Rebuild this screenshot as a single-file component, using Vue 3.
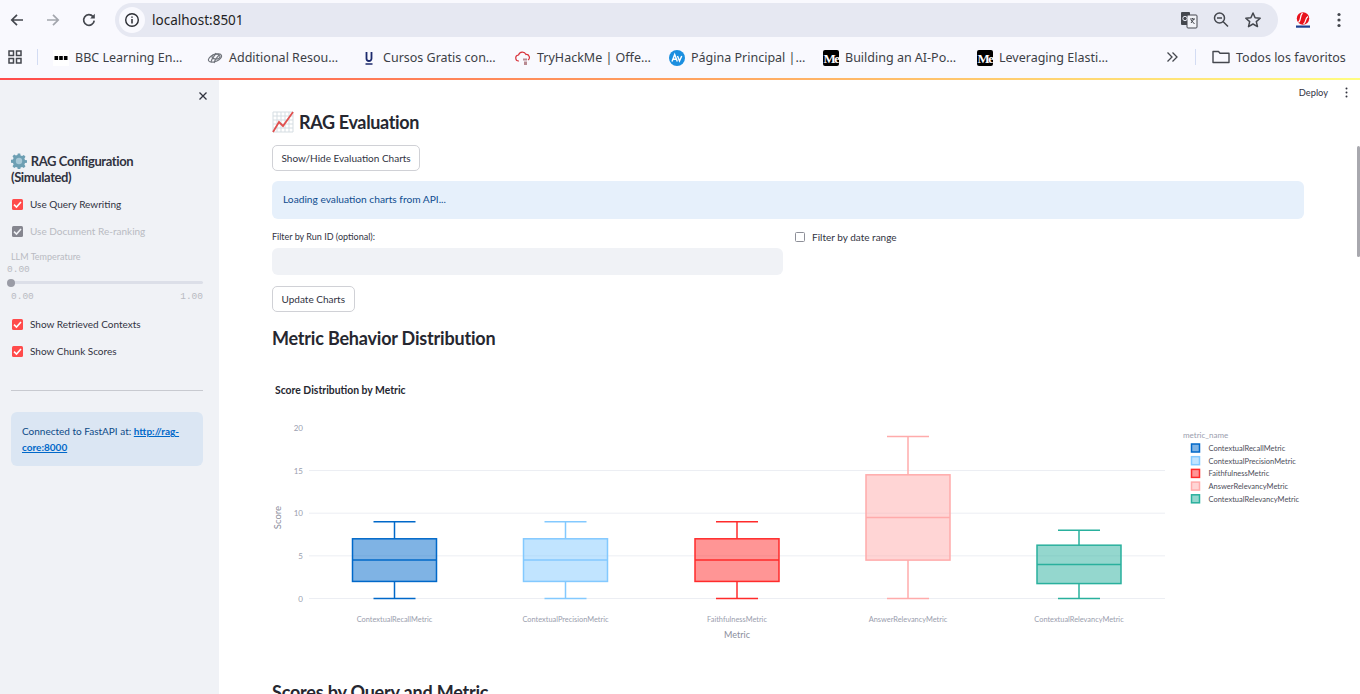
<script setup>
const bookmarks = [
  { id: 'bbc', label: 'BBC Learning En…' },
  { id: 'res', label: 'Additional Resou…' },
  { id: 'u', label: 'Cursos Gratis con…' },
  { id: 'thm', label: 'TryHackMe | Offe…' },
  { id: 'av', label: 'Página Principal |…' },
  { id: 'med', label: 'Building an AI-Po…' },
  { id: 'med', label: 'Leveraging Elasti…' }
]

// chart geometry, in px inside the svg
const y0 = 228.5
const unit = 8.53
const toY = (v) => y0 - v * unit

const boxes = [
  { name: 'ContextualRecallMetric', cx: 122.5, color: '#0068c9', lo: 0, q1: 2, med: 4.5, q3: 7, hi: 9 },
  { name: 'ContextualPrecisionMetric', cx: 293.5, color: '#83c9ff', lo: 0, q1: 2, med: 4.5, q3: 7, hi: 9 },
  { name: 'FaithfulnessMetric', cx: 465, color: '#ff2b2b', lo: 0, q1: 2, med: 4.5, q3: 7, hi: 9 },
  { name: 'AnswerRelevancyMetric', cx: 636, color: '#ffabab', lo: 0, q1: 4.5, med: 9.5, q3: 14.5, hi: 19 },
  { name: 'ContextualRelevancyMetric', cx: 807, color: '#29b09d', lo: 0, q1: 1.75, med: 4, q3: 6.25, hi: 8 }
]
const ticks = [0, 5, 10, 15, 20]
</script>

<template>
  <div class="page">
    <header class="browser">
      <div class="toolbar">
        <svg class="nav first" viewBox="0 0 16 16"><path d="M14 8H3M8 2.8 2.8 8 8 13.2" fill="none" stroke="#44474e" stroke-width="1.7"/></svg>
        <svg class="nav" viewBox="0 0 16 16"><path d="M2 8h11M8 2.8 13.2 8 8 13.2" fill="none" stroke="#a3a6ad" stroke-width="1.7"/></svg>
        <svg class="nav" viewBox="0 0 16 16"><path d="M13.2 8.6A5.3 5.3 0 1 1 12 4.6" fill="none" stroke="#44474e" stroke-width="1.7"/><path d="M13.8 1.8v4.6H9.2z" fill="#44474e"/></svg>
        <div class="omnibox">
          <span class="info-chip">
            <svg viewBox="0 0 16 16" width="16" height="16"><circle cx="8" cy="8" r="6.3" fill="none" stroke="#2b2d33" stroke-width="1.4"/><path d="M8 7v4.4M8 4.4v1.4" stroke="#2b2d33" stroke-width="1.5"/></svg>
          </span>
          <span class="url">localhost:8501</span>
          <span class="omni-actions">
            <svg viewBox="0 0 18 18" width="18" height="18"><rect x="1" y="1" width="9" height="13" rx="1" fill="#44474e"/><rect x="7" y="4" width="10" height="13" rx="1" fill="#f2f3f8" stroke="#44474e"/><circle cx="5" cy="7.5" r="2.2" fill="none" stroke="#e6e8f2"/><path d="M10 8h5M12.5 7v1M14 8l-3 4M11 9l3.5 4" stroke="#44474e" fill="none"/></svg>
            <svg viewBox="0 0 18 18" width="18" height="18"><circle cx="7.5" cy="7" r="5" fill="none" stroke="#44474e" stroke-width="1.5"/><path d="M5 7h5M11 10.5l5 5" stroke="#44474e" stroke-width="1.5"/></svg>
            <svg viewBox="0 0 18 18" width="18" height="18"><path d="m9 2 2.1 4.7 5.1.5-3.9 3.4 1.2 5L9 13l-4.5 2.6 1.2-5L1.8 7.200l5.100-.5z" fill="none" stroke="#44474e" stroke-width="1.5" stroke-linejoin="round"/></svg>
          </span>
        </div>
        <svg class="avatar" viewBox="0 0 16 16" width="16" height="16"><circle cx="8" cy="6.5" r="6.2" fill="#e8121c"/><path d="M3.5 10.500C6.500 8 4.500 4 7.500 1M8.500 12c3-2 1-5 4.500-7.500" stroke="#fff" stroke-width="1.2" fill="none"/><rect x="1" y="13.5" width="14" height="2.200" fill="#1d3f8f"/></svg>
        <svg class="chrome-dots" viewBox="0 0 4 16" width="4" height="16"><circle cx="2" cy="2.5" r="1.6" fill="#44474e"/><circle cx="2" cy="8" r="1.6" fill="#44474e"/><circle cx="2" cy="13.5" r="1.6" fill="#44474e"/></svg>
      </div>
      <div class="bookmarks">
        <svg class="apps" viewBox="0 0 14 14" width="14" height="14"><path d="M1 1h4.500v4.500H1zM8.500 1H13v4.500H8.500zM1 8.500h4.500V13H1zM8.500 8.500H13V13H8.500z" fill="none" stroke="#44474e" stroke-width="1.5"/></svg>
        <span class="bar-sep"></span>
        <div v-for="b in bookmarks" :key="b.label" class="bookmark">
          <span class="fav">
            <svg v-if="b.id === 'bbc'" viewBox="0 0 16 16" width="16" height="16"><rect width="16" height="16" fill="#fff"/><path d="M1.500 6h3.600v4H1.500zM6.200 6h3.600v4H6.200zM10.900 6h3.600v4h-3.600z" fill="#000"/></svg>
            <svg v-else-if="b.id === 'res'" viewBox="0 0 16 16" width="16" height="16"><g fill="none" stroke="#71757c" stroke-width="1.2"><ellipse cx="8" cy="8" rx="7" ry="3.5" transform="rotate(-22 8 8)"/><ellipse cx="9" cy="6.5" rx="4" ry="2.5"/><path d="M4 12c1-5 4-6 5-9M7 13c1-4 3-5 5-8"/></g></svg>
            <svg v-else-if="b.id === 'u'" viewBox="0 0 16 16" width="16" height="16"><path d="M5.500 2v6.500a2.500 2.500 0 0 0 5 0V2" fill="none" stroke="#1c2a6d" stroke-width="1.8"/><path d="M4.500 14h7" stroke="#1c2a6d" stroke-width="1.5"/></svg>
            <svg v-else-if="b.id === 'thm'" viewBox="0 0 16 16" width="16" height="16"><path d="M4 11a3 3 0 0 1-.5-6A4 4 0 0 1 11 4.500 3 3 0 0 1 13 10" fill="none" stroke="#d8343c" stroke-width="1.2"/><path d="M8 8.500h4v2H8zM9 11.500h3V15H9z" fill="#b88a92"/></svg>
            <svg v-else-if="b.id === 'av'" viewBox="0 0 16 16" width="16" height="16"><circle cx="8" cy="8" r="8" fill="#1b8fe0"/><path d="M3 11.500 5.700 4.500l2.600 7M4.300 9.300h3M8.500 6l2 5 2.200-5" fill="none" stroke="#fff" stroke-width="1.4"/></svg>
            <svg v-else viewBox="0 0 16 16" width="16" height="16"><rect width="16" height="16" rx="2" fill="#000"/><text x="0.5" y="12.5" class="medium-mark">Me</text></svg>
          </span>
          <span class="bm-label">{{ b.label }}</span>
        </div>
        <svg class="more" viewBox="0 0 12 12" width="12" height="12"><path d="M1.500 1.500 6 6l-4.500 4.500M6.500 1.500 11 6l-4.500 4.500" fill="none" stroke="#44474e" stroke-width="1.3"/></svg>
        <span class="bar-sep sep-right"></span>
        <svg class="folder" viewBox="0 0 18 14" width="18" height="14"><path d="M1 12.500V1.500h5.500L8 3.300h9v9.200z" fill="none" stroke="#44474e" stroke-width="1.4" stroke-linejoin="round"/></svg>
        <span class="bm-label all">Todos los favoritos</span>
      </div>
    </header>

    <div class="stripe"></div>

    <div class="app">
      <aside class="sidebar">
        <svg class="close" viewBox="0 0 10 10" width="10" height="10"><path d="M1.500 1.500l7 7M8.500 1.500l-7 7" stroke="#31333f" stroke-width="1.3"/></svg>
        <h3 class="side-title">
          <svg class="gear" viewBox="0 0 16 16" width="16" height="16"><path d="M6.800.5h2.400l.4 2 1.500.6 1.700-1.100 1.700 1.700-1.100 1.700.6 1.500 2 .4v2.400l-2 .4-.6 1.500 1.100 1.700-1.700 1.700-1.700-1.100-1.500.6-.4 2H6.800l-.4-2-1.500-.6-1.700 1.100-1.700-1.700 1.100-1.700-.6-1.500-2-.4V6.800l2-.4.6-1.500L1.500 3.200l1.700-1.700 1.700 1.100 1.500-.6z" fill="#6d9fb3"/><circle cx="8" cy="8" r="3.2" fill="#a7c8d6"/></svg>
          RAG Configuration<br />(Simulated)
        </h3>
        <label class="check first-check"><span class="box on"><svg viewBox="0 0 11 11"><path d="M2 5.700 4.500 8 9 3" fill="none" stroke="#fff" stroke-width="1.6"/></svg></span>Use Query Rewriting</label>
        <label class="check disabled"><span class="box off"><svg viewBox="0 0 11 11"><path d="M2 5.700 4.500 8 9 3" fill="none" stroke="#f0f2f6" stroke-width="1.6"/></svg></span>Use Document Re-ranking</label>
        <div class="slider">
          <div class="slider-label">LLM Temperature</div>
          <div class="slider-value">0.00</div>
          <div class="track"><span class="thumb"></span></div>
          <div class="slider-range"><span>0.00</span><span>1.00</span></div>
        </div>
        <label class="check"><span class="box on"><svg viewBox="0 0 11 11"><path d="M2 5.700 4.500 8 9 3" fill="none" stroke="#fff" stroke-width="1.6"/></svg></span>Show Retrieved Contexts</label>
        <label class="check"><span class="box on"><svg viewBox="0 0 11 11"><path d="M2 5.700 4.500 8 9 3" fill="none" stroke="#fff" stroke-width="1.6"/></svg></span>Show Chunk Scores</label>
        <hr class="side-rule" />
        <div class="connected">Connected to FastAPI at: <a>http://rag-core:8000</a></div>
      </aside>

      <main class="main">
        <div class="deploy-bar">
          <span>Deploy</span>
          <svg viewBox="0 0 3 11" width="3" height="11"><circle cx="1.5" cy="1.5" r="1" fill="#31333f"/><circle cx="1.5" cy="5.5" r="1" fill="#31333f"/><circle cx="1.5" cy="9.5" r="1" fill="#31333f"/></svg>
        </div>
        <div class="content">
          <h1 class="title">
            <svg viewBox="0 0 22 22" width="22" height="22"><rect x="1" y="1" width="20" height="20" fill="#fff"/><path d="M1 1h20v20H1zM5 1v20M9 1v20M13 1v20M17 1v20M1 5h20M1 9h20M1 13h20M1 17h20" fill="none" stroke="#d5dde2" stroke-width="1"/><path d="M1 21 7 11l4 4L21 1" fill="none" stroke="#e0504f" stroke-width="1.8"/></svg>
            RAG Evaluation
          </h1>
          <button class="btn">Show/Hide Evaluation Charts</button>
          <div class="alert">Loading evaluation charts from API...</div>
          <div class="filters">
            <div class="filter-run">
              <div class="field-label">Filter by Run ID (optional):</div>
              <div class="field"></div>
            </div>
            <label class="date-check"><span class="empty-box"></span>Filter by date range</label>
          </div>
          <button class="btn update">Update Charts</button>
          <h2 class="section">Metric Behavior Distribution</h2>

          <svg class="chart" width="1032" height="290" viewBox="0 0 1032 290">
            <text x="3" y="24" class="chart-title">Score Distribution by Metric</text>
            <text x="0" y="0" class="axis-title score" transform="translate(9 147.5) rotate(-90)" text-anchor="middle">Score</text>
            <text x="465" y="268" class="axis-title" text-anchor="middle">Metric</text>
            <g v-for="t in ticks" :key="t">
              <line v-if="t < 20" x1="37" x2="893" :y1="toY(t)" :y2="toY(t)" stroke="#eceef3" />
              <text x="31" :y="toY(t) + 3" text-anchor="end" class="tick">{{ t }}</text>
            </g>
            <g v-for="b in boxes" :key="b.name" :stroke="b.color" stroke-width="1.5">
              <rect :x="b.cx - 42" :y="toY(b.q3)" width="84" :height="(b.q3 - b.q1) * unit" :fill="b.color" fill-opacity="0.5" />
              <line :x1="b.cx - 42" :x2="b.cx + 42" :y1="toY(b.med)" :y2="toY(b.med)" />
              <line :x1="b.cx" :x2="b.cx" :y1="toY(b.q3)" :y2="toY(b.hi)" />
              <line :x1="b.cx" :x2="b.cx" :y1="toY(b.q1)" :y2="toY(b.lo)" />
              <line :x1="b.cx - 21" :x2="b.cx + 21" :y1="toY(b.hi)" :y2="toY(b.hi)" />
              <line :x1="b.cx - 21" :x2="b.cx + 21" :y1="toY(b.lo)" :y2="toY(b.lo)" />
              <text :x="b.cx" y="252" text-anchor="middle" class="tick name" stroke="none">{{ b.name }}</text>
            </g>
            <text x="911" y="68" class="tick">metric_name</text>
            <g v-for="(b, i) in boxes" :key="'l' + b.name">
              <rect x="919.5" :y="74 + i * 12.7" width="8" height="8" :fill="b.color" fill-opacity="0.5" :stroke="b.color" stroke-width="1.5" />
              <text x="936.5" :y="81 + i * 12.7" class="legend">{{ b.name }}</text>
            </g>
          </svg>

          <h2 class="section next">Scores by Query and Metric</h2>
        </div>
      </main>
    </div>
    <span class="scroll-thumb"></span>
  </div>
</template>

<style>
html, body { margin: 0; height: 100%; overflow: hidden; background: #fff; }
</style>

<style scoped>
.page {
  position: relative;
  width: 1360px;
  height: 694px;
  overflow: hidden;
  font-family: Lato, "Noto Sans", sans-serif;
  color: #31333f;
}
.browser {
  height: 78px;
  background: #f9f9fe;
  font-family: "Noto Sans", sans-serif;
}
.toolbar {
  height: 40px;
  display: flex;
  align-items: center;
}
.nav { width: 16px; height: 16px; margin-left: 20px; flex: none; }
.nav.first { margin-left: 9px; }
.omnibox {
  margin-left: 18px;
  width: 1163px;
  height: 34px;
  border-radius: 17px;
  background: #e6e8f2;
  display: flex;
  align-items: center;
  margin-top: -1px;
}
.info-chip {
  width: 26px;
  height: 26px;
  margin-left: 4px;
  border-radius: 50%;
  background: #f9f9fe;
  display: flex;
  align-items: center;
  justify-content: center;
}
.url { margin-left: 7px; font-size: 13.5px; color: #1f1f24; }
.omni-actions {
  margin-left: auto;
  margin-right: 16px;
  display: flex;
  gap: 14px;
  align-items: center;
}
.avatar { margin-left: 17px; flex: none; }
.chrome-dots { margin-left: 26px; flex: none; }
.bookmarks {
  box-sizing: border-box;
  height: 38px;
  padding: 0 0 4px 8px;
  display: flex;
  align-items: center;
}
.apps { flex: none; }
.bar-sep {
  width: 1px;
  height: 16px;
  background: #d3dcf3;
  margin: 0 15px;
  flex: none;
}
.bookmark {
  width: 154px;
  flex: none;
  display: flex;
  align-items: center;
}
.fav { width: 22px; height: 16px; flex: none; }
.medium-mark {
  font: bold 13px "Liberation Serif", serif;
  letter-spacing: -1.5px;
  fill: #fff;
}
.bm-label { font-size: 12.5px; color: #3c3f46; white-space: nowrap; }
.more { margin-left: 35px; flex: none; }
.sep-right { margin: 0 16px 0 17px; }
.folder { flex: none; margin-right: 6px; }
.stripe {
  height: 2px;
  background: linear-gradient(90deg, #ff4b4b, #ffa15f 50%, #fffd80);
}
.app { display: flex; height: 614px; }
.sidebar {
  position: relative;
  width: 219px;
  flex: none;
  box-sizing: border-box;
  background: #f0f2f6;
  padding: 73px 16px 0 11px;
}
.close { position: absolute; left: 198px; top: 11px; }
.side-title {
  margin: 0;
  font-size: 13px;
  letter-spacing: -0.4px;
  line-height: 16px;
  font-weight: 700;
}
.gear { vertical-align: -3px; margin-right: 1px; }
.check {
  display: flex;
  align-items: center;
  font-size: 10px;
  height: 12px;
  margin-top: 15px;
  margin-left: 1px;
  gap: 7px;
}
.first-check { margin-top: 13px; }
.box {
  width: 11px;
  height: 11px;
  border-radius: 1.5px;
  flex: none;
  display: flex;
}
.box.on { background: #ff4b4b; }
.box.off { background: #85868f; }
.disabled { color: #b9bbc2; }
.slider { height: 53px; margin-top: 14px; margin-bottom: -1px; color: #b9bbc2; }
.slider-label { font-size: 9px; line-height: 12px; }
.slider-value { font: 9.5px/12px "Liberation Mono", monospace; margin-left: -4px; margin-top: 1px; }
.track {
  position: relative;
  height: 3px;
  margin-top: 5px;
  background: #dcdfe8;
  border-radius: 2px;
}
.thumb {
  position: absolute;
  left: -4px;
  top: -2.5px;
  width: 8px;
  height: 8px;
  border-radius: 50%;
  background: #9a9ca6;
}
.slider-range {
  display: flex;
  justify-content: space-between;
  font: 9.5px/12px "Liberation Mono", monospace;
  margin-top: 7px;
}
.side-rule { border: 0; border-top: 1px solid #c8cad0; margin: 33px 0 21px; }
.connected {
  box-sizing: border-box;
  height: 54px;
  padding: 11px;
  border-radius: 6px;
  background: #dbe6f3;
  color: #0c4a86;
  font-size: 10px;
  line-height: 16px;
}
.connected a { color: #0068c9; font-weight: 700; text-decoration: underline; }
.main { position: relative; flex: 1; min-width: 0; }
.deploy-bar {
  position: absolute;
  right: 12px;
  top: 7px;
  display: flex;
  align-items: center;
  gap: 17px;
  font-size: 9.3px;
}
.content { width: 1032px; margin-left: 53px; padding-top: 29px; }
.title {
  margin: 0 0 11px;
  display: flex;
  align-items: center;
  gap: 5px;
  height: 25px;
  font-size: 18px;
  letter-spacing: -0.35px;
  font-weight: 700;
  color: #262730;
}
.btn {
  display: block;
  height: 26px;
  padding: 0 8.5px 1px;
  background: #fff;
  border: 1px solid #d0d1d6;
  border-radius: 5px;
  font: 10px Lato, "Noto Sans", sans-serif;
  color: #31333f;
}
.alert {
  box-sizing: border-box;
  height: 38px;
  margin-top: 10px;
  padding: 0 11px;
  line-height: 37px;
  border-radius: 6px;
  background: #e6f0fb;
  color: #0f4d8f;
  font-size: 10.2px;
}
.filters { display: flex; margin-top: 12px; }
.filter-run { width: 511px; }
.field-label { font-size: 9px; line-height: 12px; }
.field { height: 27px; margin-top: 5px; border-radius: 6px; background: #f0f2f6; }
.date-check {
  display: flex;
  align-items: center;
  height: 12px;
  gap: 7px;
  margin: 0 0 0 12px;
  font-size: 10px;
}
.empty-box {
  box-sizing: border-box;
  width: 10px;
  height: 10px;
  border: 1px solid #8d8f98;
  border-radius: 1.5px;
  background: #fff;
}
.update { margin-top: 11px; }
.section {
  margin: 14px 0 0;
  height: 25px;
  line-height: 25px;
  font-size: 18px;
  letter-spacing: -0.2px;
  font-weight: 700;
  color: #262730;
}
.chart { display: block; margin-top: 19px; }
.chart-title { font-size: 10.4px; font-weight: 700; fill: #262730; }
.axis-title { font-size: 9px; fill: #8b8e9c; }
.axis-title.score { font-size: 9.5px; }
.tick { font-size: 8px; fill: #9a9eae; }
.tick.name { font-size: 7.4px; }
.legend { font-size: 7.5px; fill: #4c4e59; }
.section.next { margin-top: 20px; }
.scroll-thumb {
  position: absolute;
  right: 0;
  top: 146px;
  width: 3px;
  height: 111px;
  border-radius: 2px;
  background: #a8a8ae;
}
</style>
